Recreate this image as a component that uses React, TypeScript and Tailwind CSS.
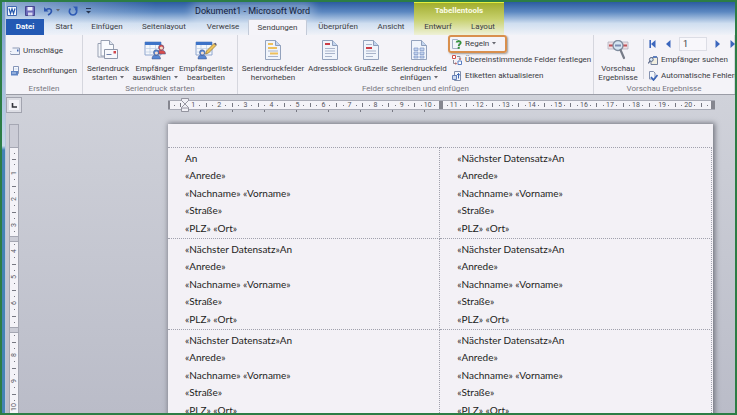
import React from 'react';
import clsx from 'clsx';

type IconName =
  | 'envelope'
  | 'label'
  | 'mailMerge'
  | 'selectPeople'
  | 'editList'
  | 'highlight'
  | 'address'
  | 'greeting'
  | 'insertField'
  | 'rules'
  | 'match'
  | 'update'
  | 'preview'
  | 'find'
  | 'check';

const Sheet = ({ children }: { children?: React.ReactNode }) => (
  <svg viewBox="0 0 20 20" className="h-5 w-5 flex-none">
    <path d="M2.500.5h10L17.500 5.500v14h-15z" fill="#f0f4fb" stroke="#93a2bd" />
    <path d="M12.500.5v5h5" fill="#c3d5ef" stroke="#8d9dba" />
    {children}
  </svg>
);

const Person = ({ x, y, fill }: { x: number; y: number; fill: string }) => (
  <g transform={`translate(${x} ${y})`}>
    <path d="M0 9.500C0 6.500 1.500 5.500 4 5.500s4.500 1 4.500 4z" fill={fill} stroke="#3c4f80" strokeWidth=".5" />
    <circle cx="4.200" cy="3" r="2.700" fill={fill} stroke="#3c4f80" strokeWidth=".5" />
    <circle cx="4.400" cy="3.500" r="1.600" fill="#f3dccb" />
  </g>
);

const Icon = ({ name }: { name: IconName }) => {
  switch (name) {
    case 'envelope':
      return (
        <svg viewBox="0 0 10 10" className="h-[10px] w-[10px] flex-none">
          <path d="M0 5.500h2M0 7.500h2" stroke="#a3aec4" />
          <path d="M2.500 2h7v6.500h-9" fill="#eef2fa" stroke="#8d99b4" />
          <path d="M7 3.500h1.500v2H7z" fill="#3f66b5" />
        </svg>
      );
    case 'label':
      return (
        <svg viewBox="0 0 10 10" className="h-[10px] w-[10px] flex-none">
          <path d="M3.500.5h5v7h-5z" fill="#f7f9fd" stroke="#8595b8" />
          <path d="M1 5h7v4.500H1z" fill="#5e84c4" />
          <path d="M4.500 3h3M2 7h4" stroke="#c8d8f1" />
        </svg>
      );
    case 'mailMerge':
      return (
        <svg viewBox="0 0 22 20" className="h-5 w-[22px] flex-none">
          <path d="M1 3.500h7l3 3V17H1z" fill="#f4f6fb" stroke="#99a1b3" />
          <path d="M4 .5h8.500l4 4V16H4z" fill="#fafbfe" stroke="#99a1b3" />
          <path d="M12.500.5v4h4" fill="#dfe5f0" stroke="#99a1b3" />
          <path d="M7.500 9.500h13v9h-13z" fill="#f7f8fc" stroke="#8e97ab" />
          <path d="M16.500 11h2.500v2.500h-2.500z" fill="#d1454b" />
          <path d="M9.500 14.500h5" stroke="#6d7fa8" />
        </svg>
      );
    case 'selectPeople':
      return (
        <svg viewBox="0 0 22 20" className="h-5 w-[22px] flex-none">
          <path d="M1 2h16v13H1z" fill="#f4f7fc" stroke="#8fa6cf" />
          <path d="M1 2h16v3H1z" fill="#3d73c8" />
          <path d="M1 8.500h16M1 12h16M6 5v10M11.500 5v10" stroke="#bccbe3" strokeWidth=".7" />
          <Person x={13} y={4.5} fill="#d84d4e" />
          <Person x={8} y={9.5} fill="#5686d3" />
        </svg>
      );
    case 'editList':
      return (
        <svg viewBox="0 0 22 20" className="h-5 w-[22px] flex-none">
          <path d="M1 2h16v13H1z" fill="#f4f7fc" stroke="#8fa6cf" />
          <path d="M1 2h16v3H1z" fill="#3d73c8" />
          <path d="M1 8.500h16M1 12h16M6 5v10M11.500 5v10" stroke="#bccbe3" strokeWidth=".7" />
          <Person x={3} y={9.5} fill="#5686d3" />
          <path d="M10.500 14l1-3L19 3.500l2 2-7.500 7.500z" fill="#efc45a" stroke="#8c7334" strokeWidth=".7" />
          <path d="M19 3.500l2 2 .7-1.200-1.300-1.500z" fill="#5a5a6b" />
        </svg>
      );
    case 'highlight':
      return (
        <Sheet>
          <path d="M5 4h5M5 8h9" stroke="#eec05a" strokeWidth="2" />
          <path d="M5 11h10M5 16.500h10" stroke="#a9b4cb" />
          <path d="M7 13.500h8" stroke="#eec05a" strokeWidth="2" />
        </Sheet>
      );
    case 'address':
      return (
        <Sheet>
          <path d="M5 4h5" stroke="#cc3c45" strokeWidth="2" />
          <path d="M5 8.500h10M5 11h10M5 13.500h10M5 16.500h7" stroke="#a9b4cb" />
        </Sheet>
      );
    case 'greeting':
      return (
        <Sheet>
          <path d="M5 4.500h6M5 11h10M5 13.500h10M5 16.500h7" stroke="#a9b4cb" />
          <path d="M5 8h6" stroke="#cc3c45" strokeWidth="2" />
        </Sheet>
      );
    case 'insertField':
      return (
        <Sheet>
          <path d="M5 8h4v2.500H5zM11 8h4v2.500h-4zM5 12h4v2.500H5zM11 12h4v2.500h-4zM5 16h4v2H5zM11 16h4v2h-4z" fill="#c3d4ef" stroke="#7f97c6" strokeWidth=".7" />
        </Sheet>
      );
    case 'rules':
      return (
        <svg viewBox="0 0 10 10" className="h-[10px] w-[10px] flex-none">
          <path d="M.5.5h5L7 2v7.500H.5z" fill="#f3f6fb" stroke="#a5b0c6" />
          <path d="M4.500 3.500C5 1.500 9 1.700 8.700 4c-.2 1.500-2 1.300-2 3" fill="none" stroke="#36923c" strokeWidth="1.800" />
          <path d="M5.700 8h2v1.800h-2z" fill="#36923c" />
        </svg>
      );
    case 'match':
      return (
        <svg viewBox="0 0 10 10" className="h-[10px] w-[10px] flex-none">
          <path d="M.5.5h3v3h-3z" fill="#fff" stroke="#d0504a" />
          <path d="M6 6h3.500v3.500H6z" fill="#fff" stroke="#5a7ec3" />
          <path d="M5 1.500h3V5M1.500 5v3.500H4" fill="none" stroke="#8b8d9c" />
          <path d="M6.500 3.500h3L8 5zM3.500 7v3L5 8.500z" fill="#c8504c" />
        </svg>
      );
    case 'update':
      return (
        <svg viewBox="0 0 10 10" className="h-[10px] w-[10px] flex-none">
          <path d="M2.500 .5h6v9h-6z" fill="#f3f6fb" stroke="#7f8dab" />
          <path d="M.5 4.500h4v4h-4z" fill="#cbdaf2" stroke="#6580b7" />
          <path d="M6.500 2.500v5M4.500 4.500l2-2 1.500 2" fill="none" stroke="#3c66b5" />
        </svg>
      );
    case 'preview':
      return (
        <svg viewBox="0 0 22 20" className="h-5 w-[22px] flex-none">
          <path d="M1 2h20v7H1z" fill="#f0dfe2" stroke="#a7a9ba" strokeWidth=".7" />
          <path d="M2 5.500h4M16 5.500h4" stroke="#c05359" strokeWidth="2" />
          <circle cx="11" cy="5.500" r="5" fill="#d3e7f5" fillOpacity=".9" stroke="#7f8c9e" strokeWidth="1.300" />
          <path d="M8 5.500h6" stroke="#7d8fb3" strokeWidth="2" />
          <path d="M13.500 10l3.500 8" stroke="#777c88" strokeWidth="2.200" strokeLinecap="round" />
        </svg>
      );
    case 'find':
      return (
        <svg viewBox="0 0 10 10" className="h-[10px] w-[10px] flex-none">
          <path d="M3 2.500h6.500v7H3z" fill="#f1eedf" stroke="#75819d" />
          <path d="M5 1h4v2H5z" fill="#5e7fbd" />
          <circle cx="3.300" cy="4.500" r="1.900" fill="#dcebf8" stroke="#566484" />
          <path d="M2 6L.3 8.500" stroke="#566484" strokeWidth="1.200" />
        </svg>
      );
    case 'check':
      return (
        <svg viewBox="0 0 10 10" className="h-[10px] w-[10px] flex-none">
          <path d="M1.500.5h4l1.500 1.500v6H1.500z" fill="#f3f6fb" stroke="#8391b0" />
          <path d="M3 6l2.500 3L9.500 4" fill="none" stroke="#3863b6" strokeWidth="1.700" />
        </svg>
      );
  }
};

const Caret = () => (
  <svg viewBox="0 0 4 3" className="ml-[3px] inline-block h-[3px] w-1 align-middle">
    <path d="M0 0h4L2 2.500z" fill="#66676f" />
  </svg>
);

interface LargeButtonProps {
  icon: IconName;
  lines: string[];
  width: string;
  menu?: boolean;
}

const LargeButton = ({ icon, lines, width, menu }: LargeButtonProps) => (
  <button className={clsx('flex flex-none flex-col items-center gap-1 pt-[5px]', width)}>
    <Icon name={icon} />
    <span className="flex flex-col items-center leading-[9px] whitespace-nowrap">
      {lines.map((line, i) => (
        <span key={line}>
          {line}
          {menu && i === lines.length - 1 && <Caret />}
        </span>
      ))}
    </span>
  </button>
);

const SmallButton = ({ icon, label, menu, marked }: { icon: IconName; label: string; menu?: boolean; marked?: boolean }) => (
  <button className="relative flex h-4 items-center gap-[3px] pl-1 whitespace-nowrap">
    <Icon name={icon} />
    <span>
      {label}
      {menu && <Caret />}
    </span>
    {marked && (
      <span className="absolute -top-px left-0 h-[18px] w-[59px] rounded-[3px] border-2 border-[#d98f4d] shadow-[1px_1px_2px_#9b9b9b]" />
    )}
  </button>
);

const Group = ({ title, className, children }: { title: string; className?: string; children: React.ReactNode }) => (
  <section className={clsx('flex flex-col border-r border-[#d5d6de]', className)}>
    <div className="flex flex-1">{children}</div>
    <h2 className="text-center leading-[10px] whitespace-nowrap text-[#77777f]">{title}</h2>
  </section>
);

const tabs = [
  { label: 'Start', width: 'w-10' },
  { label: 'Einfügen', width: 'w-[46px]' },
  { label: 'Seitenlayout', width: 'w-[68px]' },
  { label: 'Verweise', width: 'w-[50px]' },
  { label: 'Sendungen', width: 'w-[59px]', active: true },
  { label: 'Überprüfen', width: 'w-[62px]' },
  { label: 'Ansicht', width: 'w-[44px]' },
];

const TitleBar = () => (
  <header className="flex h-[33px] flex-none bg-[linear-gradient(to_right,rgba(235,241,250,0.5),rgba(235,241,250,0.2)_90px,transparent_150px),linear-gradient(to_bottom,#2b5c9f,#5c88c1_30%,#cfdef0_65%,#f0f2f8)]">
    <div className="flex w-[408px] flex-none flex-col">
      <div className="flex h-[17px] items-center">
        <div className="flex w-[189px] items-center gap-2 pl-px">
          <svg viewBox="0 0 10 10" className="h-[10px] w-[10px]">
            <path d="M.5.5h9v9h-9z" fill="#f4f7fc" stroke="#4069b3" />
            <path d="M2 2.500l1.500 5L5 3l1.500 4.500 1.500-5" fill="none" stroke="#2658ad" strokeWidth="1.200" />
          </svg>
          <button aria-label="Speichern">
            <svg viewBox="0 0 10 10" className="h-[10px] w-[10px]">
              <path d="M.5.5h9v9h-9z" fill="#6d69ba" stroke="#46478f" />
              <path d="M2.500 1h5v3.500h-5z" fill="#eef0fb" />
              <path d="M3 6.500h4.500v3H3z" fill="#d5d6ef" />
            </svg>
          </button>
          <button aria-label="Rückgängig" className="flex items-center">
            <svg viewBox="0 0 10 10" className="h-[10px] w-[10px]">
              <path d="M1 1v4.500h4.500z" fill="#2d55ad" />
              <path d="M3 4c2-2 5.500-1.500 5.500 1C8.500 7 7 8 5 9" fill="none" stroke="#2d55ad" strokeWidth="1.600" />
            </svg>
            <Caret />
          </button>
          <button aria-label="Wiederholen">
            <svg viewBox="0 0 10 10" className="h-[10px] w-[10px]">
              <path d="M2.500 2.500C0 5.500 2 9 5 9s5-3.500 2.500-6" fill="none" stroke="#2f5bb5" strokeWidth="1.600" />
              <path d="M5 .5h4.500V5z" fill="#2f5bb5" />
            </svg>
          </button>
          <svg viewBox="0 0 5 6" className="h-[6px] w-[5px]">
            <path d="M0 .5h5" stroke="#26344f" />
            <path d="M0 3h5L2.500 5.500z" fill="#26344f" />
          </svg>
        </div>
        <h1 className="rounded-full bg-white/25 text-[9px] leading-3 whitespace-nowrap text-[#15203a] shadow-[0_0_8px_5px_rgba(255,255,255,0.25)]">
          Dokument1 - Microsoft Word
        </h1>
      </div>
      <nav className="flex h-4">
        <button className="w-[38px] bg-[#2359b4] font-semibold text-white">Datei</button>
        {tabs.map((tab) => (
          <button
            key={tab.label}
            className={clsx(
              'flex-none',
              tab.width,
              tab.active && 'rounded-t-[2px] border border-b-0 border-[#c3cad8] bg-[#f5f4f9]'
            )}
          >
            {tab.label}
          </button>
        ))}
      </nav>
    </div>
    <div className="flex w-[90px] flex-col border-t border-[#e3ee3c] bg-linear-to-b from-[#a2ae2b] via-[#c7d06b] to-[#eff1d8]">
      <div className="h-4 text-center leading-4 font-bold text-[#fbfce9]">Tabellentools</div>
      <nav className="flex flex-1">
        <button className="w-12">Entwurf</button>
        <button className="flex-1">Layout</button>
      </nav>
    </div>
  </header>
);

const NavArrow = ({ label, flip, end }: { label: string; flip?: boolean; end?: boolean }) => (
  <button aria-label={label} className="flex-none">
    <svg viewBox="0 0 8 8" className={clsx('h-2 w-2', flip && '-scale-x-100')}>
      <path d="M6.500 0v8L2 4z" fill="#3b66bd" />
      {end && <path d="M1.200 0v8" stroke="#3b66bd" strokeWidth="1.600" />}
    </svg>
  </button>
);

const Ribbon = () => (
  <div className="flex h-[60px] flex-none overflow-hidden border-b border-[#9a9ca6] bg-[#f4f3f8]">
    <Group title="Erstellen" className="w-[77px] flex-none">
      <div className="flex flex-col gap-1 pt-2">
        <SmallButton icon="envelope" label="Umschläge" />
        <SmallButton icon="label" label="Beschriftungen" />
      </div>
    </Group>
    <Group title="Seriendruck starten" className="w-[155px] flex-none">
      <LargeButton icon="mailMerge" lines={['Seriendruck', 'starten']} width="w-[50px]" menu />
      <LargeButton icon="selectPeople" lines={['Empfänger', 'auswählen']} width="w-[44px]" menu />
      <LargeButton icon="editList" lines={['Empfängerliste', 'bearbeiten']} width="w-[58px]" />
    </Group>
    <Group title="Felder schreiben und einfügen" className="w-[356px] flex-none">
      <LargeButton icon="highlight" lines={['Seriendruckfelder', 'hervorheben']} width="w-[70px]" />
      <LargeButton icon="address" lines={['Adressblock']} width="w-[44px]" />
      <LargeButton icon="greeting" lines={['Grußzeile']} width="w-[38px]" />
      <LargeButton icon="insertField" lines={['Seriendruckfeld', 'einfügen']} width="w-[58px]" menu />
      <div className="flex flex-col pt-px">
        <SmallButton icon="rules" label="Regeln" menu marked />
        <SmallButton icon="match" label="Übereinstimmende Felder festlegen" />
        <SmallButton icon="update" label="Etiketten aktualisieren" />
      </div>
    </Group>
    <Group title="Vorschau Ergebnisse" className="min-w-0 flex-1">
      <LargeButton icon="preview" lines={['Vorschau', 'Ergebnisse']} width="w-12" />
      <div className="mt-1 ml-px h-10 w-px flex-none bg-[#d5d6de]" />
      <div className="flex w-0 flex-1 flex-col pt-px">
        <div className="flex h-4 items-center gap-[7px] pl-[5px]">
          <NavArrow label="Erster Datensatz" end />
          <NavArrow label="Vorheriger Datensatz" />
          <input
            aria-label="Datensatz"
            defaultValue="1"
            className="h-[14px] w-[28px] flex-none border border-[#dcdde5] bg-[#f8f7fb] px-[3px] text-[9px]"
          />
          <NavArrow label="Nächster Datensatz" flip />
          <NavArrow label="Letzter Datensatz" flip end />
        </div>
        <SmallButton icon="find" label="Empfänger suchen" />
        <SmallButton icon="check" label="Automatische Fehlerü" />
      </div>
    </Group>
  </div>
);

const numbers = (count: number) => Array.from({ length: count }, (_, i) => i + 1);

const HorizontalRuler = () => (
  <div className="relative h-[19px] min-w-0 flex-1 text-[7px] text-[#55565e]">
    <div className="flex h-[10px] border-y border-[#a9abb6] bg-[#f4f3f8]">
      <div className="w-[2px] bg-[#85868f]" />
      <div className="flex w-5 items-center justify-evenly">
        <span className="h-px w-px bg-[#777882]" />
        <span className="h-1 w-px bg-[#777882]" />
        <span className="h-px w-px bg-[#777882]" />
      </div>
      {numbers(20).map((n) => (
        <div key={n} className="grid flex-1 grid-cols-4 place-items-center">
          <span className="leading-2">{n}</span>
          <span className="h-px w-px bg-[#777882]" />
          <span className={n === 10 ? 'h-2 w-1 bg-[#85868f]' : 'h-1 w-px bg-[#777882]'} />
          <span className="h-px w-px bg-[#777882]" />
        </div>
      ))}
      <div className="w-1 bg-[#85868f]" />
    </div>
    <div className="flex gap-[31px] pl-8">
      {numbers(8).map((n) => (
        <span key={n} className="h-[2px] w-px flex-none bg-[#777882]" />
      ))}
    </div>
    <svg viewBox="0 0 8 14" className="absolute -top-[2px] left-[13px] h-[14px] w-2">
      <path d="M.5.5h7v2L4 6 .5 2.500zM4 6l3.500 3.500v4h-7v-4zM.5 10h7" fill="#f0eff5" stroke="#80828d" strokeWidth=".8" />
    </svg>
  </div>
);

const VerticalRuler = () => (
  <div className="relative ml-[3px] h-[330px] w-[10px] flex-none border-x border-t border-[#a5a7b3] bg-[#f4f3f8] text-[7px] text-[#55565e]">
    <div className="h-[23px] border-b border-[#a5a7b3] bg-[#cbccd6]" />
    <div className="flex h-[22px] flex-col items-center justify-evenly">
      <span className="h-px w-px bg-[#777882]" />
      <span className="h-px w-1 bg-[#777882]" />
      <span className="h-px w-px bg-[#777882]" />
    </div>
    {numbers(10).map((n) => (
      <div key={n} className="grid h-[26px] grid-rows-4 place-items-center">
        <span className="rotate-180 leading-2 [writing-mode:vertical-rl]">{n}</span>
        <span className="h-px w-px bg-[#777882]" />
        <span className="h-px w-1 bg-[#777882]" />
        <span className="h-px w-px bg-[#777882]" />
      </div>
    ))}
    <div className="absolute inset-x-0 top-[111px] h-[6px] border-y border-[#a5a7b3] bg-[#cbccd6]" />
    <div className="absolute inset-x-0 top-[202px] h-[6px] border-y border-[#a5a7b3] bg-[#cbccd6]" />
  </div>
);

const next = '«Nächster Datensatz»';

const labelRows = [
  ['', next],
  [next, next],
  [next, next],
];

const Label = ({ prefix }: { prefix: string }) => (
  <div className="flex h-[87px] flex-col justify-between leading-[17px]">
    <p>{prefix}An</p>
    <p>«Anrede»</p>
    <p>«Nachname» «Vorname»</p>
    <p>«Straße»</p>
    <p>«PLZ» «Ort»</p>
  </div>
);

const Page = () => (
  <div className="h-[330px] min-w-0 flex-1 bg-[#f3f1f6] pt-[23px] pr-px shadow-[1px_0_5px_1px_#73757f]">
    <table className="w-full table-fixed border-collapse font-[Lato,sans-serif] text-[10px] text-[#1d1d22]">
      <tbody>
        {labelRows.map((row, i) => (
          <tr key={i} className="h-[91px]">
            {row.map((prefix, j) => (
              <td key={j} className="border border-dotted border-[#a0a1ad] p-0 pl-[17px] first:border-l-0">
                <Label prefix={prefix} />
              </td>
            ))}
          </tr>
        ))}
      </tbody>
    </table>
  </div>
);

export default function App() {
  return (
    <div className="flex h-screen overflow-hidden border-2 border-[#2c7d45] font-[Roboto,sans-serif] text-[8px] text-[#3b3c44]">
      <div className="w-1 flex-none border-r border-[#b7c6da] bg-linear-to-b from-[#7399c9] from-0% via-[#c7d9ea] via-35% to-[#4583b5] to-36%" />
      <div className="flex min-w-0 flex-1 flex-col">
        <TitleBar />
        <Ribbon />
        <main className="flex flex-1 flex-col overflow-hidden bg-linear-to-b from-[#d0d2da] to-[#babcc8]">
          <div className="flex h-[29px] flex-none pt-[2px] pr-[20px]">
            <button
              aria-label="Tabstopp"
              className="mr-[146px] flex h-4 w-4 flex-none items-center justify-center border border-[#a2a4af] bg-[#dcdde4]"
            >
              <svg viewBox="0 0 10 10" className="h-[10px] w-[10px]">
                <path d="M0 0h10v10H0z" fill="#f5f4f9" />
                <path d="M3.500 3v4H8" fill="none" stroke="#33343b" strokeWidth="1.600" />
              </svg>
            </button>
            <div className="flex min-w-0 flex-1 pt-[3px]">
              <HorizontalRuler />
            </div>
          </div>
          <div className="flex pr-[22px]">
            <VerticalRuler />
            <div className="w-[149px] flex-none" />
            <Page />
          </div>
        </main>
      </div>
    </div>
  );
}
